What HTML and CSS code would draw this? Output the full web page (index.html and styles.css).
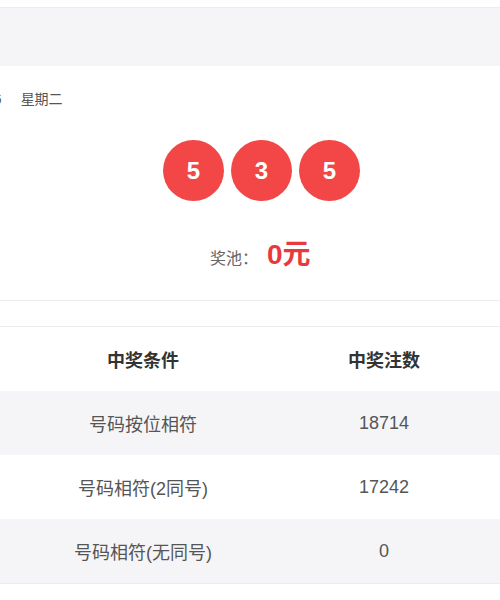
FILE: index.html
```html
<!DOCTYPE html>
<html>
<head>
    <meta charset="utf-8">
    <title>开奖详情</title>
    <link rel="stylesheet" href="styles.css">
</head>
<body>
    <div class="top-gap"></div>
    <div class="top-band"></div>

    <div class="draw-card">
        <div class="draw-date"><span class="date-num">2023-05-16</span><span class="weekday">星期二</span></div>
        <div class="balls">
            <span class="ball">5</span>
            <span class="ball">3</span>
            <span class="ball">5</span>
        </div>
        <div class="pool"><span class="pool-label">奖池：</span><span class="pool-amount">0元</span></div>
    </div>

    <div class="spacer"></div>

    <div class="prize-table">
        <div class="row head">
            <div class="cell">中奖条件</div>
            <div class="cell">中奖注数</div>
        </div>
        <div class="row odd">
            <div class="cell">号码按位相符</div>
            <div class="cell">18714</div>
        </div>
        <div class="row">
            <div class="cell">号码相符(2同号)</div>
            <div class="cell">17242</div>
        </div>
        <div class="row odd">
            <div class="cell">号码相符(无同号)</div>
            <div class="cell">0</div>
        </div>
    </div>
</body>
</html>
```

FILE: styles.css
```css
body {
    margin: 0;
    background: #fff;
    font-family: "Liberation Sans", "Noto Sans CJK SC", sans-serif;
    color: #333;
    overflow: hidden;
}

.top-gap {
    height: 7px;
    border-bottom: 1px solid #ececf0;
}

.top-band {
    height: 58px;
    background: #f5f5f8;
}

.draw-card {
    height: 234px;
    border-bottom: 1px solid #ececf0;
}

.draw-date {
    padding-top: 22px;
    margin-left: -70px;
    font-size: 14px;
    color: #555;
    white-space: nowrap;
}

.weekday {
    margin-left: 19px;
}

.balls {
    display: flex;
    gap: 7px;
    margin-top: 32px;
    padding-left: 163px;
}

.ball {
    width: 61px;
    height: 61px;
    border-radius: 50%;
    background: #f34647;
    color: #fff;
    font-size: 24px;
    font-weight: bold;
    display: flex;
    align-items: center;
    justify-content: center;
}

.pool {
    display: flex;
    align-items: baseline;
    margin-top: 31px;
    padding-left: 210px;
}

.pool-label {
    font-size: 16px;
    color: #666;
}

.pool-amount {
    margin-left: 9px;
    color: #e8393c;
    font-size: 28px;
    font-weight: bold;
}

.spacer {
    height: 25px;
    border-bottom: 1px solid #ececf0;
}

.prize-table {
    border-bottom: 1px solid #ececf0;
}

.row {
    display: grid;
    grid-template-columns: 286px 196px;
    height: 64px;
    align-items: center;
    font-size: 18px;
    color: #555;
}

.row.odd {
    background: #f5f5f8;
}

.row.head {
    font-weight: bold;
    color: #333;
}

.cell {
    text-align: center;
}
```
